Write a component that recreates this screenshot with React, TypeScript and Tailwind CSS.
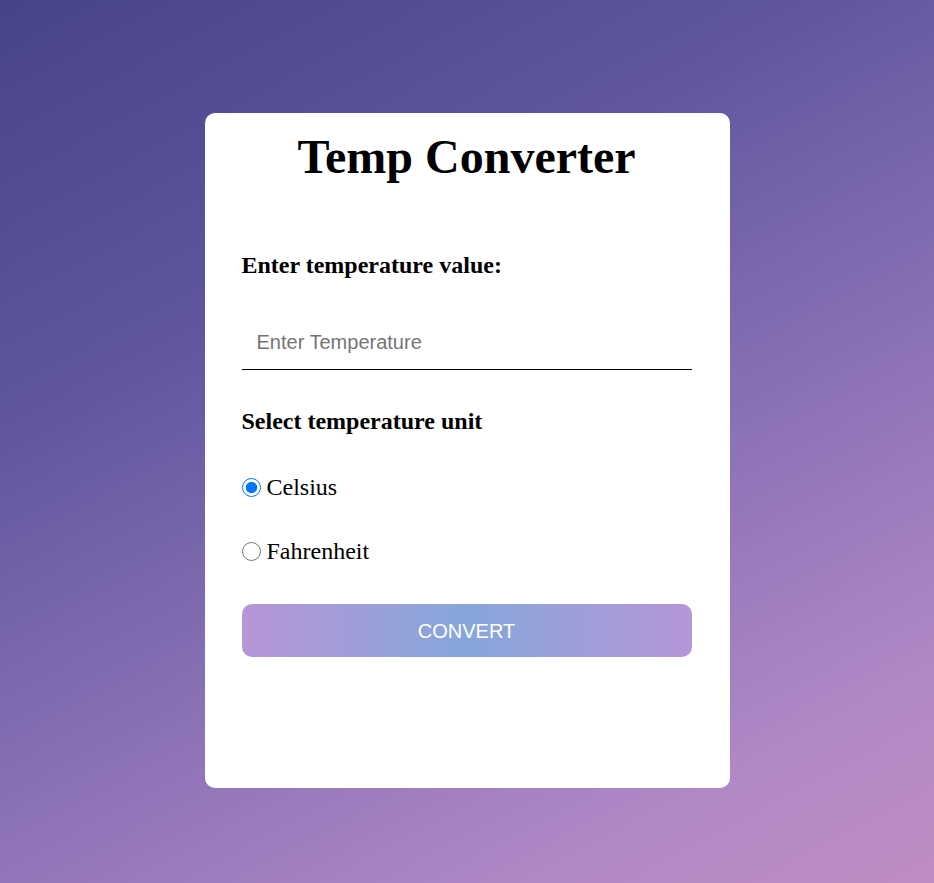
import { useState } from "react";

export default function App() {
  const [value, setValue] = useState("");
  const [unit, setUnit] = useState<"c" | "f">("c");

  return (
    <div className="min-h-[883px] w-full bg-[linear-gradient(152deg,#47438a_0%,#5e559d_30%,#8c72b6_60%,#b189c6_85%,#c08cc4_100%)] pt-[113px] font-['Liberation_Serif',serif]">
      <div className="mx-auto flex h-[675px] w-[525px] flex-col rounded-[10px] bg-white pl-[37px] pr-[38px]">
        <h1 className="mt-[16px] text-center text-[48px] leading-[55px] font-bold text-black">
          Temp Converter
        </h1>

        <label className="mt-[67px] text-[24px] leading-[28px] font-bold text-black">
          Enter temperature value:
        </label>

        <input
          type="text"
          value={value}
          onChange={(e) => setValue(e.target.value)}
          placeholder="Enter Temperature"
          className="mt-[37px] h-[54px] w-full border-b border-black px-[15px] font-['Liberation_Sans',Arial,sans-serif] text-[20px] text-black outline-none placeholder:text-[#757575]"
        />

        <p className="mt-[37px] text-[24px] leading-[28px] font-bold text-black">
          Select temperature unit
        </p>

        <label className="mt-[38px] flex items-center gap-[6px] text-[24px] leading-[28px] text-black">
          <input
            type="radio"
            name="unit"
            checked={unit === "c"}
            onChange={() => setUnit("c")}
            className="m-0 h-[19px] w-[19px]"
          />
          Celsius
        </label>

        <label className="mt-[36px] flex items-center gap-[6px] text-[24px] leading-[28px] text-black">
          <input
            type="radio"
            name="unit"
            checked={unit === "f"}
            onChange={() => setUnit("f")}
            className="m-0 h-[19px] w-[19px]"
          />
          Fahrenheit
        </label>

        <button className="mt-[39px] h-[53px] w-full rounded-[10px] bg-[linear-gradient(90deg,#b696d6_0%,#87a6db_50%,#b696d6_100%)] font-['Liberation_Sans',Arial,sans-serif] text-[20px] text-white">
          CONVERT
        </button>
      </div>
    </div>
  );
}
